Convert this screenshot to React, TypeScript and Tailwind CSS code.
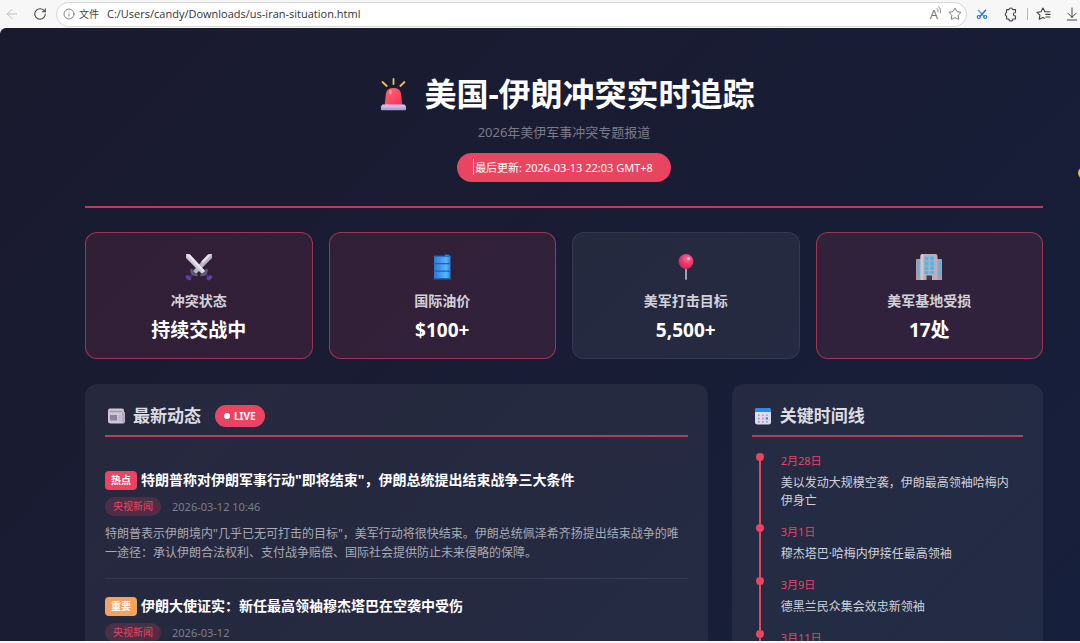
import type { ReactNode } from 'react';
import { ArrowDownToLine, ArrowLeft, Info, RotateCw, Star } from 'lucide-react';

function ReadAloudIcon() {
  return (
    <span className="relative block h-4 w-4 text-[13px] leading-4 text-[#777]" aria-hidden="true">
      A
      <svg viewBox="0 0 6 8" className="absolute top-0 right-0 h-2 w-1.5" fill="none" stroke="currentColor" strokeWidth="0.9" strokeLinecap="round">
        <path d="M1 2.6c.9.8 1.2 1.9.9 3.2" />
        <path d="M2.6.7c1.8 1.6 2.4 3.8 1.7 6.2" />
      </svg>
    </span>
  );
}

function SnipIcon() {
  return (
    <svg viewBox="0 0 14 14" className="h-3.5 w-3.5" fill="none" strokeLinecap="round">
      <path d="M3.4 3.2 9 9.4" stroke="#3fa0ee" strokeWidth="1.3" />
      <path d="M10.6 3.2 5 9.4" stroke="#1f5fd0" strokeWidth="1.3" />
      <circle cx="3.8" cy="10" r="1.5" stroke="#1f6fdc" strokeWidth="1.2" />
      <circle cx="10.2" cy="10" r="1.5" stroke="#1f6fdc" strokeWidth="1.2" />
    </svg>
  );
}

function ExtensionIcon() {
  return (
    <svg viewBox="0 0 16 16" className="h-4 w-4" fill="none" stroke="#444" strokeWidth="1.1" strokeLinejoin="round">
      <path d="M3.6 3.6h2.3a2 2 0 0 1 3.9 0h2.7v2.600a.5.5 0 0 1-.5.5 1.600 1.600 0 0 0 0 3.200.5.5 0 0 1 .5.5v2.600H9.900a2 2 0 0 1-4 0H3.600v-2.800a2 2 0 0 1 0-3.800z" />
    </svg>
  );
}

function FavoritesIcon() {
  return (
    <svg viewBox="0 0 16 16" className="h-4 w-4" fill="none" stroke="#444" strokeWidth="1.1" strokeLinecap="round" strokeLinejoin="round">
      <path d="M8.8 5.6 6.9 2 5 5.8l-4 .6 2.9 2.8-.7 4.1 3.7-1.9 1.6.8" />
      <path d="M8.8 5.8H14M9.8 8.4H14M9.8 11H14" />
    </svg>
  );
}

function SirenIcon() {
  return (
    <svg viewBox="0 0 36 36" className="h-9 w-9" aria-hidden="true">
      <defs>
        <linearGradient id="siren-dome" x1="0" x2="1" y1="0" y2="1">
          <stop offset="0" stopColor="#ff6a78" />
          <stop offset="0.6" stopColor="#ff4560" />
          <stop offset="1" stopColor="#e0355c" />
        </linearGradient>
        <linearGradient id="siren-base" x1="0" x2="0" y1="0" y2="1">
          <stop offset="0" stopColor="#d9cdf0" />
          <stop offset="1" stopColor="#a896cf" />
        </linearGradient>
      </defs>
      <g stroke="#f6bd4b" strokeWidth="1.8" strokeLinecap="round">
        <path d="M20.5 3v5M9.500 6l4.200 4M31.500 6l-4.200 4" />
      </g>
      <path d="M11.500 30 13 17.500q1-5.500 7.500-5.500t7.500 5.500L29.500 30z" fill="url(#siren-dome)" />
      <ellipse cx="17.500" cy="16" rx="1.600" ry="2.400" fill="#ff9aa4" opacity="0.8" />
      <path d="M9.500 28.500h22l1.500 2v3q0 .8-.8.8H8.800q-.8 0-.8-.8v-3z" fill="url(#siren-base)" />
    </svg>
  );
}

function SwordsIcon() {
  return (
    <svg viewBox="0 0 28 28" className="h-7 w-7" aria-hidden="true">
      <path d="M18 20 23.500 24M10 20 4.500 24" stroke="#3d3268" strokeWidth="2.200" />
      <path d="M23.500 25.500 25.500 24M2.500 24 4.500 25.500" stroke="#5b45a0" strokeWidth="3.600" strokeLinecap="round" />
      <path d="M27 1v4L11 21 8 18 23 1.500z" fill="#b9b0c4" />
      <path d="M1 1v4L17 21 20 18 5 1.500z" fill="#cfc8d8" />
      <path d="M1 1 5 1.500 20 18l-1.500 1.500z" fill="#e9e5ee" />
      <path d="M27 1 23 1.500 16.300 8.600l1.700 1.700z" fill="#e6e1eb" />
      <path d="M6.500 17q0 4.500 5 5M21.500 17q0 4.500-5 5" fill="none" stroke="#62577c" strokeWidth="2.600" strokeLinecap="round" />
    </svg>
  );
}

function BarrelIcon() {
  return (
    <svg viewBox="0 0 28 28" className="h-7 w-7" aria-hidden="true">
      <defs>
        <linearGradient id="barrel" x1="0" x2="1">
          <stop offset="0" stopColor="#2f78cf" />
          <stop offset="0.350" stopColor="#3e97ec" />
          <stop offset="0.750" stopColor="#55b5ff" />
          <stop offset="1" stopColor="#2d7fd6" />
        </linearGradient>
      </defs>
      <path d="M6 3h16.500v23H6z" fill="url(#barrel)" />
      <path d="M5.500 2.500h17.500v1.300H5.500zM5.500 10h17.500v1.200H5.500zM5.500 17.500h17.500v1.200H5.500zM5.500 25h17.500v1.400H5.500z" fill="#255fb2" />
      <path d="M17 1.500h4v1.500h-4z" fill="#397bc6" />
    </svg>
  );
}

function PinIcon() {
  return (
    <svg viewBox="0 0 28 28" className="h-7 w-7" aria-hidden="true">
      <defs>
        <radialGradient id="pin" cx="0.600" cy="0.300" r="0.700">
          <stop offset="0" stopColor="#ff6795" />
          <stop offset="0.600" stopColor="#ef3569" />
          <stop offset="1" stopColor="#cc2660" />
        </radialGradient>
      </defs>
      <path d="M13 14h2v12q0 1-1 1t-1-1z" fill="#a69db3" />
      <circle cx="14" cy="8.500" r="7.400" fill="url(#pin)" />
      <circle cx="16.500" cy="5.600" r="1.700" fill="#ffc1d4" opacity="0.850" />
    </svg>
  );
}

function OfficeIcon() {
  return (
    <svg viewBox="0 0 28 28" className="h-7 w-7" aria-hidden="true">
      <path d="M1 7q0-1 1-1h4v21H1zM22 6h4q1 0 1 1v20h-5z" fill="#a99fab" />
      <path d="M5.500 3q0-2 2-2h13q2 0 2 2v24h-17z" fill="#b9aeba" />
      <path d="M5.500 3q0-2 2-2h1v26h-3z" fill="#d0c6cf" />
      <path
        d="M9.500 3.500h4v4h-4zM15 3.500h4v4h-4zM9.500 8.500h4v4h-4zM15 8.500h4v4h-4zM9.500 13.500h4v3.500h-4zM15 13.500h4v3.500h-4zM9.500 18h4v3h-4zM15 18h4v3h-4zM2 8.500h2.200v4H2zM2 13.500h2.200v4H2zM2 18.500h2.200v3.500H2zM23.800 8.500H26v4h-2.200zM23.800 13.500H26v4h-2.200zM23.800 18.500H26v3.500h-2.200z"
        fill="#56b4e4"
      />
      <path d="M11.500 22.500h5.500V27h-5.500z" fill="#43374d" />
    </svg>
  );
}

function NewspaperIcon() {
  return (
    <svg viewBox="0 0 22 22" className="h-[22px] w-[22px]" aria-hidden="true">
      <path d="M3 5.500q0-2 2-2h12q2 0 2 2V17q0 1.500-1.500 1.500h-12Q3 18.500 3 16z" fill="#cfc5da" />
      <path d="M17 7h3v9.500q0 2-1.500 2t-1.500-2z" fill="#b4a8c4" />
      <path d="M4.500 6.500H17" stroke="#9d93ae" strokeWidth="1.200" />
      <path d="M5 10h7v5.500H5z" fill="#8d849c" />
      <path d="M13.500 11h3M13.500 13h3M13.500 15h3" stroke="#b3a9c2" strokeWidth="0.900" />
    </svg>
  );
}

function CalendarIcon() {
  return (
    <svg viewBox="0 0 22 22" className="h-[22px] w-[22px]" aria-hidden="true">
      <rect x="3" y="3" width="16" height="16.500" rx="2.500" fill="#e0d9ee" />
      <path d="M3 7v-1.500Q3 3 5.500 3h11Q19 3 19 5.500V7z" fill="#2b8af0" />
      <g fill="#a79cbd">
        <path d="M10 9.400h1.700v1.700H10zM14 9.400h1.700v1.700H14zM6 9.400h1.700v1.700H6zM6 12.700h1.700v1.700H6zM10 12.700h1.700v1.700H10zM6 16h1.700v1.700H6zM10 16h1.700v1.700H10zM14 16h1.700v1.700H14z" />
      </g>
      <path d="M13.700 12.300H16v2.300h-2.300z" fill="#2b8af0" />
    </svg>
  );
}

function BrowserBar() {
  return (
    <header className="flex h-7 shrink-0 items-center bg-[#f7f7f7] pl-1">
      <button type="button" aria-label="后退" className="grid h-6 w-4 place-items-center text-[#b5b5b5]">
        <ArrowLeft className="h-4 w-4" strokeWidth={1.3} />
      </button>
      <button type="button" aria-label="刷新" className="ml-3 grid h-6 w-4 place-items-center text-[#444]">
        <RotateCw className="h-3.5 w-3.5" strokeWidth={1.8} />
      </button>
      <div className="ml-2 flex h-[25px] min-w-0 flex-1 items-center rounded-full border border-[#d6d6d6] bg-white px-1">
        <Info className="ml-0.5 h-3 w-3 shrink-0 text-[#666]" strokeWidth={1.6} />
        <label htmlFor="address" className="ml-1 shrink-0 text-[10px] text-[#444]">
          文件
        </label>
        <input
          id="address"
          className="ml-2 min-w-0 flex-1 bg-transparent font-['Open_Sans','Noto_Sans_CJK_SC',sans-serif] text-[11px] text-[#333] outline-none"
          defaultValue="C:/Users/candy/Downloads/us-iran-situation.html"
        />
        <button type="button" aria-label="大声朗读">
          <ReadAloudIcon />
        </button>
        <button type="button" aria-label="收藏" className="ml-1.5 text-[#666]">
          <Star className="h-3.5 w-3.5" strokeWidth={1.5} />
        </button>
      </div>
      <div className="ml-2 flex shrink-0 items-center">
        <button type="button" aria-label="截图">
          <SnipIcon />
        </button>
        <button type="button" aria-label="扩展" className="ml-3.5">
          <ExtensionIcon />
        </button>
        <span className="mx-2 h-3 w-px bg-[#b8b8b8]" />
        <button type="button" aria-label="收藏夹">
          <FavoritesIcon />
        </button>
        <button type="button" aria-label="下载" className="ml-3 text-[#444]">
          <ArrowDownToLine className="h-4 w-4" strokeWidth={1.5} />
        </button>
      </div>
    </header>
  );
}

const stats: { icon: ReactNode; label: string; value: string; alert: boolean }[] = [
  { icon: <SwordsIcon />, label: '冲突状态', value: '持续交战中', alert: true },
  { icon: <BarrelIcon />, label: '国际油价', value: '$100+', alert: true },
  { icon: <PinIcon />, label: '美军打击目标', value: '5,500+', alert: false },
  { icon: <OfficeIcon />, label: '美军基地受损', value: '17处', alert: true },
];

const news = [
  {
    tag: '热点',
    tagClass: 'bg-[#e94560]',
    title: '特朗普称对伊朗军事行动"即将结束"，伊朗总统提出结束战争三大条件',
    source: '央视新闻',
    time: '2026-03-12 10:46',
    summary:
      '特朗普表示伊朗境内"几乎已无可打击的目标"，美军行动将很快结束。伊朗总统佩泽希齐扬提出结束战争的唯一途径：承认伊朗合法权利、支付战争赔偿、国际社会提供防止未来侵略的保障。',
  },
  {
    tag: '重要',
    tagClass: 'bg-[#f4a261]',
    title: '伊朗大使证实：新任最高领袖穆杰塔巴在空袭中受伤',
    source: '央视新闻',
    time: '2026-03-12',
    summary: '',
  },
];

const timeline = [
  { date: '2月28日', text: '美以发动大规模空袭，伊朗最高领袖哈梅内伊身亡' },
  { date: '3月1日', text: '穆杰塔巴·哈梅内伊接任最高领袖' },
  { date: '3月9日', text: '德黑兰民众集会效忠新领袖' },
  { date: '3月11日', text: '' },
];

function PanelTitle({ icon, children, extra }: { icon: ReactNode; children: ReactNode; extra?: ReactNode }) {
  return (
    <div className="flex items-center border-b-2 border-[#e94560]/75 pb-[7px]">
      {icon}
      <h2 className="ml-1.5 text-[17px] leading-6 font-semibold text-[#dcdce1]">{children}</h2>
      {extra}
    </div>
  );
}

export default function App() {
  return (
    <div className="flex h-screen flex-col bg-[#f7f7f7] pb-0.5 font-['Noto_Sans','Noto_Sans_CJK_SC',sans-serif]">
      <BrowserBar />
      <div className="relative min-h-0 flex-1 overflow-hidden rounded-tl-md bg-linear-135 from-[#1a1a2e] to-[#161f3b]">
        <main className="h-full overflow-y-auto pr-[37px] pl-[85px] [scrollbar-width:none]">
          <section className="flex flex-col items-center border-b-2 border-[#e94560]/80 pt-[43px] pb-6">
            <h1 className="flex items-center gap-[15px] text-[32px] leading-[46px] font-bold text-white">
              <SirenIcon />
              美国-伊朗冲突实时追踪
            </h1>
            <p className="mt-[5px] text-[13px] leading-5 text-[#7b7b87]">2026年美伊军事冲突专题报道</p>
            <div className="relative mt-[11px] rounded-full bg-[#e94560] px-[18px] text-[11px] leading-[29px] text-white">
              最后更新: 2026-03-13 22:03 GMT+8
              <span className="absolute top-1.5 left-4 h-4 w-px bg-white/80" />
            </div>
          </section>

          <section className="mt-6 grid grid-cols-4 gap-4 text-center">
            {stats.map((s) => (
              <div
                key={s.label}
                className={
                  s.alert
                    ? 'rounded-xl border border-[#e94560]/60 bg-[#e94560]/12 py-4'
                    : 'rounded-xl border border-white/8 bg-white/6 py-4'
                }
              >
                <div className="flex h-9 items-center justify-center">{s.icon}</div>
                <h3 className="mt-1.5 text-sm leading-5 font-semibold text-[#d3d0d8]">{s.label}</h3>
                <p className="mt-[7px] text-[19px] leading-6 font-bold text-white">{s.value}</p>
              </div>
            ))}
          </section>

          <div className="mt-[25px] grid grid-cols-[2fr_1fr] gap-6 pb-6">
            <section className="rounded-xl bg-white/6 p-5">
              <PanelTitle
                icon={<NewspaperIcon />}
                extra={
                  <span className="ml-3.5 flex items-center gap-1 rounded-full bg-[#e94560] px-[9px] text-[10px] leading-[22px] font-bold text-white">
                    <span className="h-1.5 w-1.5 rounded-full bg-white" />
                    LIVE
                  </span>
                }
              >
                最新动态
              </PanelTitle>
              <ul className="mt-4 divide-y divide-white/8">
                {news.map((n) => (
                  <li key={n.title} className="py-4">
                    <h3 className="flex items-center gap-1 text-sm leading-[22px] font-bold text-white">
                      <span className={`rounded px-1.5 text-[10px] leading-[19px] ${n.tagClass}`}>{n.tag}</span>
                      {n.title}
                    </h3>
                    <div className="mt-1.5 flex items-center gap-[11px] leading-[19px]">
                      <span className="rounded-full bg-[#e94560]/20 px-2 text-[10px] text-[#e94560]">{n.source}</span>
                      <time className="text-[11px] text-[#7d7f8c]">{n.time}</time>
                    </div>
                    {n.summary && <p className="mt-2 text-xs leading-[19px] text-[#a9aab3]">{n.summary}</p>}
                  </li>
                ))}
              </ul>
            </section>

            <section className="rounded-xl bg-white/6 p-5">
              <PanelTitle icon={<CalendarIcon />}>关键时间线</PanelTitle>
              <ol className="mt-4">
                {timeline.map((t) => (
                  <li key={t.date} className="flex gap-4">
                    <div className="ml-1 flex w-[9px] flex-col items-center">
                      <span className="h-2 w-2 shrink-0 rounded-full bg-[#e94560]" />
                      <span className="w-0.5 flex-1 bg-[#e94560]" />
                    </div>
                    <div className="min-w-0 flex-1 pr-1 pb-3.5">
                      <time className="block text-[11px] leading-4 text-[#e94560]">{t.date}</time>
                      <p className="mt-[5px] text-xs leading-[18px] text-[#d0d1d8]">{t.text}</p>
                    </div>
                  </li>
                ))}
              </ol>
            </section>
          </div>
        </main>
        <span className="absolute top-[139px] -right-2.5 h-3 w-3 rounded-full bg-[#d9c82e]" />
      </div>
    </div>
  );
}
